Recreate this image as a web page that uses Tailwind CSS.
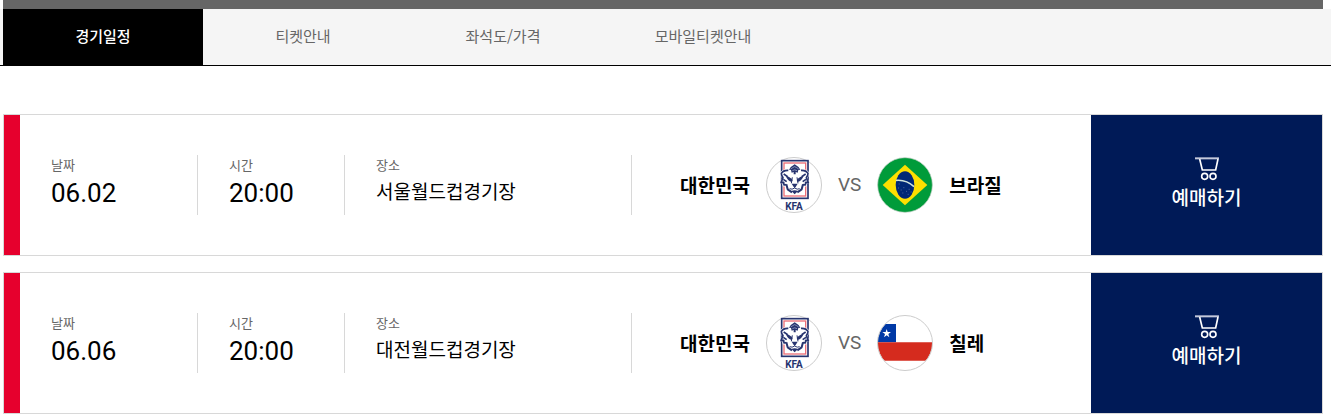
<!DOCTYPE html>
<html lang="ko">
<head>
  <meta charset="utf-8">
  <meta name="viewport" content="width=device-width, initial-scale=1">
  <title>경기일정</title>
  <script src="https://cdn.jsdelivr.net/npm/@tailwindcss/browser@4"></script>
</head>
<body class="bg-white text-black font-['Noto_Sans_CJK_KR',sans-serif]">
  <!-- Shared emblems and icons -->
  <svg class="absolute size-0" aria-hidden="true">
    <symbol id="kfa" viewBox="18 21 168 168">
      <circle cx="102" cy="105" r="82.5" fill="#fff" stroke="#ccc" stroke-width="3"/>
      <rect x="65" y="32" width="79" height="113" fill="#fff" stroke="#27346f" stroke-width="5"/>
      <rect x="72" y="39" width="65" height="99" fill="#fff" stroke="#ec6f78" stroke-width="4"/>
      <path d="M84 55 Q95 48 104 41 Q113 48 124 55 L127 58 Q140 56 148 69 Q148 79 142 84 L149 99 L141 101 L140 109 L131 110 L126 122 L104 136 L82 122 L77 110 L68 109 L67 101 L59 99 L66 84 Q60 79 60 69 Q68 56 81 58 Z" fill="#fff"/>
      <g fill="none" stroke="#27346f" stroke-width="5" stroke-linejoin="round">
        <path d="M85 61 Q70 60 64 70 Q64 78 69 83 L63 98 L71 97 L72 105 L79 104"/>
        <path d="M123 61 Q138 60 144 70 Q144 78 139 83 L145 98 L137 97 L136 105 L129 104"/>
        <path d="M79 103 L83 118 L96 127 M129 103 L125 118 L112 127" stroke-width="6"/>
        <path d="M71 72 L83 80 M137 72 L125 80 M70 88 L80 95 M138 88 L128 95"/>
        <path d="M97 82 L94 100 M111 82 L114 100" stroke-width="3"/>
        <path d="M104 109 V114 M104 114 Q96 120 89 116 M104 114 Q112 120 119 116" stroke-width="3"/>
      </g>
      <g fill="#27346f">
        <path d="M87 59 Q90 51 104 43 Q118 51 121 59 L115 60 L113 68 L107 66 V73 H101 V66 L95 68 L93 60 Z"/>
        <path d="M77 77 Q87 78 98 90 L95 96 Q83 93 77 77 Z"/>
        <path d="M131 77 Q121 78 110 90 L113 96 Q125 93 131 77 Z"/>
        <path d="M95 101 H113 L107 111 H101 Z"/>
        <path d="M94 123 Q104 118 114 123 L104 133 Z"/>
      </g>
      <path d="M92 57 Q99 52 104 50 Q109 52 116 57 M97 62 Q104 57 111 62" fill="none" stroke="#b4bad4" stroke-width="2"/>
    </symbol>
    <symbol id="brazil" viewBox="21 21 168 168">
      <circle cx="105" cy="105" r="82" fill="#009b3a" stroke="#b5c9bb" stroke-width="2"/>
      <path d="M38 105 L105 44 L172 105 L105 166 Z" fill="#fedf00"/>
      <ellipse cx="105" cy="105" rx="28" ry="41" fill="#002776"/>
      <path d="M78 91 Q109 88 132 110" fill="none" stroke="#cfe3dc" stroke-width="5"/>
      <path d="M86 102 h3 M84 114 h3 M92 120 h3 M100 113 h3 M97 129 h3 M108 124 h3 M116 118 h3 M113 133 h3 M122 126 h3" stroke="#4a6299" stroke-width="3"/>
    </symbol>
    <symbol id="chile" viewBox="21 21 168 168">
      <clipPath id="round"><circle cx="105" cy="105" r="82"/></clipPath>
      <g clip-path="url(#round)">
        <path d="M21 21 H189 V189 H21 Z" fill="#fff"/>
        <path d="M21 48 H78 V103 H21 Z" fill="#0039a6"/>
        <path d="M21 103 H189 V158 H21 Z" fill="#d52b1e"/>
        <path d="M50 63 L53 72 H63 L55 78 L58 88 L50 82 L42 88 L45 78 L37 72 H47 Z" fill="#fff"/>
      </g>
      <circle cx="105" cy="105" r="82.5" fill="none" stroke="#ccc" stroke-width="3"/>
    </symbol>
    <symbol id="cart" viewBox="136 52 72 72">
      <path d="M136 56 H208" stroke="#c3c8da" stroke-width="6"/>
      <g fill="none" stroke="#fff" stroke-width="5">
        <path d="M150 58 L158 91 H198 L205 58"/>
        <circle cx="165" cy="110" r="9"/>
        <circle cx="190" cy="110" r="9"/>
      </g>
    </symbol>
  </svg>

  <div class="h-[9px] ml-[3px] mr-2 bg-[#666]"></div>

  <!-- Tabs -->
  <nav class="flex pl-[3px] bg-[#f5f5f5] border-b border-black text-[15px] text-[#666]">
    <a href="#" class="w-[200px] h-14 pb-0.5 flex items-center justify-center bg-black text-white font-medium">경기일정</a>
    <a href="#" class="w-[200px] h-14 pb-0.5 flex items-center justify-center">티켓안내</a>
    <a href="#" class="w-[200px] h-14 pb-0.5 flex items-center justify-center">좌석도/가격</a>
    <a href="#" class="w-[200px] h-14 pb-0.5 flex items-center justify-center">모바일티켓안내</a>
  </nav>

  <!-- Match list -->
  <ul class="mt-12 mb-1 ml-[3px] mr-2 space-y-4">
    <li class="flex items-center border border-[#d8d8d8]">
      <div class="w-4 self-stretch bg-[#e6002d]"></div>
      <dl class="w-[178px] h-[60px] pl-[31px] border-r border-[#d8d8d8]">
        <dt class="text-[13px] leading-5 text-[#666]">날짜</dt>
        <dd class="font-[Roboto] text-[26px] leading-9">06.02</dd>
      </dl>
      <dl class="w-[147px] h-[60px] pl-[31px] border-r border-[#d8d8d8]">
        <dt class="text-[13px] leading-5 text-[#666]">시간</dt>
        <dd class="font-[Roboto] text-[26px] leading-9">20:00</dd>
      </dl>
      <dl class="w-[287px] h-[60px] pl-[31px] border-r border-[#d8d8d8]">
        <dt class="text-[13px] leading-5 text-[#666]">장소</dt>
        <dd class="text-[19px] leading-8">서울월드컵경기장</dd>
      </dl>
      <div class="flex-1 flex items-center gap-4 pl-12 text-[19px]">
        <span class="font-bold">대한민국</span>
        <svg class="size-14" viewBox="0 0 56 56" role="img" aria-label="KFA">
          <use href="#kfa"/>
          <text x="28" y="53" text-anchor="middle" fill="#27346f" class="font-[Roboto] text-[10px] font-bold">KFA</text>
        </svg>
        <span class="font-[Roboto] text-[#666]">VS</span>
        <svg class="size-14" role="img" aria-label="브라질"><use href="#brazil"/></svg>
        <span class="font-bold">브라질</span>
      </div>
      <button type="button" class="w-[231px] h-[140px] flex flex-col items-center justify-center bg-[#001a57] text-white text-[19px] leading-8 font-medium cursor-pointer">
        <svg class="size-6" aria-hidden="true"><use href="#cart"/></svg>
        예매하기
      </button>
    </li>
    <li class="flex items-center border border-[#d8d8d8]">
      <div class="w-4 self-stretch bg-[#e6002d]"></div>
      <dl class="w-[178px] h-[60px] pl-[31px] border-r border-[#d8d8d8]">
        <dt class="text-[13px] leading-5 text-[#666]">날짜</dt>
        <dd class="font-[Roboto] text-[26px] leading-9">06.06</dd>
      </dl>
      <dl class="w-[147px] h-[60px] pl-[31px] border-r border-[#d8d8d8]">
        <dt class="text-[13px] leading-5 text-[#666]">시간</dt>
        <dd class="font-[Roboto] text-[26px] leading-9">20:00</dd>
      </dl>
      <dl class="w-[287px] h-[60px] pl-[31px] border-r border-[#d8d8d8]">
        <dt class="text-[13px] leading-5 text-[#666]">장소</dt>
        <dd class="text-[19px] leading-8">대전월드컵경기장</dd>
      </dl>
      <div class="flex-1 flex items-center gap-4 pl-12 text-[19px]">
        <span class="font-bold">대한민국</span>
        <svg class="size-14" viewBox="0 0 56 56" role="img" aria-label="KFA">
          <use href="#kfa"/>
          <text x="28" y="53" text-anchor="middle" fill="#27346f" class="font-[Roboto] text-[10px] font-bold">KFA</text>
        </svg>
        <span class="font-[Roboto] text-[#666]">VS</span>
        <svg class="size-14" role="img" aria-label="칠레"><use href="#chile"/></svg>
        <span class="font-bold">칠레</span>
      </div>
      <button type="button" class="w-[231px] h-[140px] flex flex-col items-center justify-center bg-[#001a57] text-white text-[19px] leading-8 font-medium cursor-pointer">
        <svg class="size-6" aria-hidden="true"><use href="#cart"/></svg>
        예매하기
      </button>
    </li>
  </ul>
</body>
</html>
